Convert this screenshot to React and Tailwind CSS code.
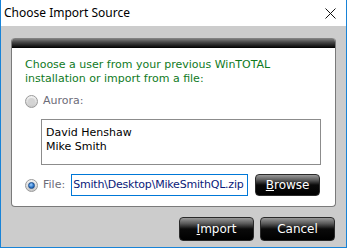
import { useState } from 'react';

function Radio({ checked, disabled }) {
  return (
    <span className="relative flex h-[13px] w-[13px] shrink-0 items-center justify-center rounded-full border border-[#9a9a9a] bg-gradient-to-b from-[#f4f4f4] to-[#c8c8c8]">
      {checked && (
        <span className="h-[7px] w-[7px] rounded-full border border-[#1c4f8f] bg-[radial-gradient(circle_at_40%_35%,#9fd0ff,#2a74c8_60%,#164b8c)]" />
      )}
      {disabled && !checked && <span className="h-[7px] w-[7px] rounded-full bg-[#d4d4d4]" />}
    </span>
  );
}

function DarkButton({ children, className = '' }) {
  return (
    <button
      className={`flex items-center justify-center rounded-[4px] border border-[#2a2a2a] bg-[linear-gradient(to_bottom,#9a9a9a_0%,#5a5a5a_25%,#0a0a0a_50%,#000_100%)] font-['DejaVu_Sans',sans-serif] text-[12px] text-white ${className}`}
    >
      {children}
    </button>
  );
}

export default function App() {
  const [source, setSource] = useState('file');
  return (
    <div className="flex h-[248px] w-[347px] flex-col border-x border-b border-[#1883d7] font-['DejaVu_Sans',sans-serif]">
      <div className="flex h-[26px] items-center justify-between bg-white pl-[3px] pr-[10px]">
        <span className="font-['Noto_Sans',sans-serif] text-[12px] text-black">Choose Import Source</span>
        <svg width="11" height="11" viewBox="0 0 11 11">
          <path d="M0.5 0.5 L10.5 10.5 M10.5 0.5 L0.5 10.5" stroke="#111" strokeWidth="1" />
        </svg>
      </div>
      <div className="flex flex-1 flex-col bg-[#cccccc] px-[10px] pt-[12px]">
        <div className="flex h-[169px] flex-col overflow-hidden rounded-[4px] border-x border-b border-[#7a7a7a] bg-white">
          <div className="h-[10px] shrink-0 bg-[linear-gradient(to_bottom,#8a8a8a,#4a4a4a_40%,#000)]" />
          <div className="mt-[10px] pl-[13px] text-[11px] leading-[14px] text-[#0f7a1e]">
            Choose a user from your previous WinTOTAL
            <br />
            installation or import from a file:
          </div>
          <div className="mt-[8px] flex h-[14px] items-center gap-[5px] pl-[13px]" onClick={() => setSource('aurora')}>
            <Radio checked={source === 'aurora'} disabled />
            <span className="text-[11px] text-[#6c6c78]">Aurora:</span>
          </div>
          <div className="ml-[29px] mt-[11px] h-[46px] w-[280px] border border-[#8c8c8c] px-[4px] pt-[6px] text-[11px] leading-[14px] text-black">
            <div>David Henshaw</div>
            <div>Mike Smith</div>
          </div>
          <div className="mt-[9px] flex items-center pl-[13px]">
            <span onClick={() => setSource('file')} className="flex items-center gap-[5px]">
              <Radio checked={source === 'file'} />
              <span className="text-[11px] text-[#6c6c78]">File:</span>
            </span>
            <div className="ml-[6px] flex h-[22px] w-[177px] items-center overflow-hidden border border-[#0078d7] pl-[1px] text-[11px] tracking-[-0.2px] whitespace-nowrap text-[#0a1a7a]">
              Smith\Desktop\MikeSmithQL.zip
            </div>
            <DarkButton className="ml-[7px] h-[22px] w-[65px]">
              <span><u>B</u>rowse</span>
            </DarkButton>
          </div>
        </div>
        <div className="mt-[10px] flex justify-end gap-[6px] pr-[1px]">
          <DarkButton className="h-[24px] w-[75px]">
            <span><u>I</u>mport</span>
          </DarkButton>
          <DarkButton className="h-[24px] w-[75px]">Cancel</DarkButton>
        </div>
      </div>
    </div>
  );
}
